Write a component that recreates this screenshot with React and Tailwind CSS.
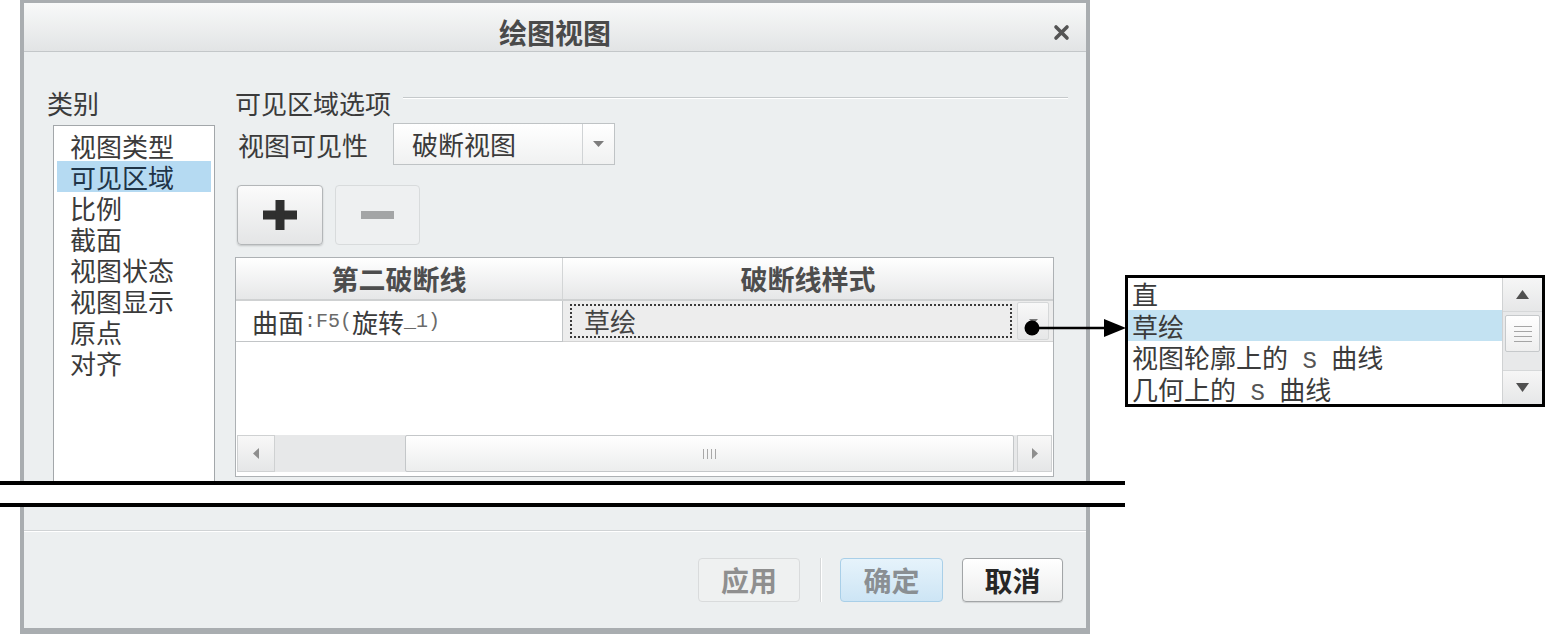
import React from 'react';

const categories = ['视图类型', '可见区域', '比例', '截面', '视图状态', '视图显示', '原点', '对齐'];

const Tri = ({ dir = 'down', w = 10, h = 6, className = '' }) => {
  const pts = {
    down: '0,0 10,0 5,10',
    up: '0,10 10,10 5,0',
    left: '10,0 10,10 0,5',
    right: '0,0 0,10 10,5',
  }[dir];
  return (
    <svg width={w} height={h} viewBox="0 0 10 10" preserveAspectRatio="none" className={className}>
      <polygon points={pts} fill="currentColor" />
    </svg>
  );
};

const CloseIcon = () => (
  <svg width="17" height="17" viewBox="0 0 17 17">
    <path d="M3 3 L14 14 M14 3 L3 14" stroke="#545454" strokeWidth="3.6" strokeLinecap="round" />
  </svg>
);

const PlusIcon = () => (
  <svg width="34" height="30" viewBox="0 0 34 30">
    <rect x="0" y="10.5" width="34" height="9" fill="#2f2f2f" />
    <rect x="12.5" y="0" width="9" height="30" fill="#2f2f2f" />
  </svg>
);

const MinusIcon = () => (
  <svg width="33" height="8" viewBox="0 0 33 8">
    <rect x="0" y="0" width="33" height="8" fill="#a3a5a6" />
  </svg>
);

const TopPart = () => (
  <div className="ml-[20px] w-[1070px] h-[481px] shrink-0 flex flex-col border-x-4 border-t-[3px] border-[#a9adb0] bg-[#eceff0]">
    {/* title bar */}
    <div className="h-[49px] shrink-0 grid grid-cols-[1fr_auto_1fr] items-center pt-[10px] bg-linear-to-b from-[#f8f9f9] to-[#e2e4e5] border-b border-[#c3c7c9]">
      <div />
      <div className="text-[28px] font-bold leading-none text-[#4a4a4a]">绘图视图</div>
      <div className="flex justify-end pr-[16px]">
        <CloseIcon />
      </div>
    </div>

    <div className="flex-1 min-h-0 flex pl-[23px] pt-[35px] gap-[20px]">
      {/* category list */}
      <div className="w-[168px] flex flex-col">
        <div className="h-[31px] text-[26px] leading-[31px]">类别</div>
        <div className="mt-[7px] ml-[6px] flex-1 bg-white border border-b-0 border-[#a3a7aa] pt-[4px]">
          {categories.map((c) => (
            <div
              key={c}
              className={
                c === '可见区域'
                  ? 'mx-[3px] h-[31px] pl-[13px] text-[26px] leading-[31px] bg-[#b5daf2] text-[#1f3447]'
                  : 'mx-[3px] h-[31px] pl-[13px] text-[26px] leading-[31px]'
              }
            >
              {c}
            </div>
          ))}
        </div>
      </div>

      {/* options */}
      <div className="w-[819px] flex flex-col">
        <div className="h-[31px] flex">
          <span className="text-[26px] leading-[31px]">可见区域选项</span>
          <div className="flex-1 mt-[10px] ml-[12px] -mr-[14px] h-[2px] border-t border-[#c5c9cb] border-b border-b-white" />
        </div>

        <div className="mt-[5px] h-[42px] flex items-center pl-[3px]">
          <span className="w-[155px] text-[26px] leading-[31px]">视图可见性</span>
          <div className="w-[222px] h-[42px] flex border border-[#bfc3c5] bg-linear-to-b from-white to-[#f0f1f1]">
            <div className="flex-1 pl-[18px] text-[26px] leading-[40px]">破断视图</div>
            <div className="w-[32px] border-l border-[#d0d3d5] flex items-center justify-center text-[#7d7d7d]">
              <Tri w={11} h={6} />
            </div>
          </div>
        </div>

        <div className="mt-[20px] h-[60px] flex gap-[12px] pl-[2px]">
          <button className="w-[86px] h-[60px] rounded-[4px] border border-[#b3b6b8] bg-linear-to-b from-[#fbfbfb] to-[#e4e5e6] shadow-[0_1px_2px_rgba(0,0,0,0.18)] flex items-center justify-center">
            <PlusIcon />
          </button>
          <button className="w-[85px] h-[60px] rounded-[4px] border border-[#d8dbdc] bg-[#eef0f1] flex items-center justify-center">
            <MinusIcon />
          </button>
        </div>

        {/* table */}
        <div className="mt-[12px] h-[220px] border border-[#adb1b4] bg-white flex flex-col">
          <div className="h-[43px] flex bg-linear-to-b from-white to-[#e6e7e8] border-b-2 border-[#cfd1d2] text-[27px] font-bold text-[#4d4d4d]">
            <div className="w-[327px] border-r border-[#d3d5d6] flex items-center justify-center leading-none">第二破断线</div>
            <div className="flex-1 flex items-center justify-center leading-none">破断线样式</div>
          </div>
          <div className="h-[41px] flex">
            <div className="w-[327px] border-r border-b border-[#c2c5c7] bg-white pl-[16px] flex items-center text-[26px] leading-[31px]">
              <span>曲面</span>
              <span className="font-['Liberation_Mono',monospace] text-[20px] text-[#6a6a6a]">:F5(</span>
              <span>旋转</span>
              <span className="font-['Liberation_Mono',monospace] text-[20px] text-[#6a6a6a]">_1)</span>
            </div>
            <div className="flex-1 bg-[#ededed] flex items-center pl-[7px] pr-[2px] border-b border-[#d3d3d3]">
              <div className="w-[442px] h-[34px] border-2 border-dotted border-[#3a3a3a] pl-[12px] text-[26px] leading-[29px] text-[#444]">草绘</div>
              <div className="ml-[5px] w-[32px] h-[38px] rounded-[2px] border border-[#d6d8d9] bg-linear-to-b from-[#f8f8f8] to-[#e6e7e8] flex items-center justify-center text-[#777]">
                <Tri w={9} h={5} />
              </div>
            </div>
          </div>
          <div className="flex-1" />
          <div className="h-[37px] mx-[1px] flex bg-[#e7e8e9]">
            <div className="w-[38px] border border-[#cfd1d2] bg-linear-to-b from-[#f8f8f8] to-[#e5e6e7] flex items-center justify-center text-[#8e8e8e]">
              <Tri dir="left" w={6} h={11} />
            </div>
            <div className="w-[130px]" />
            <div className="flex-1 border border-[#c4c7c9] rounded-[2px] bg-linear-to-b from-white to-[#eceded] flex items-center justify-center gap-[3px]">
              <div className="w-px h-[10px] bg-[#a8a8a8]" />
              <div className="w-px h-[10px] bg-[#a8a8a8]" />
              <div className="w-px h-[10px] bg-[#a8a8a8]" />
              <div className="w-px h-[10px] bg-[#a8a8a8]" />
            </div>
            <div className="w-[3px]" />
            <div className="w-[35px] border border-[#cfd1d2] bg-linear-to-b from-[#f8f8f8] to-[#e5e6e7] flex items-center justify-center text-[#8e8e8e]">
              <Tri dir="right" w={6} h={11} />
            </div>
          </div>
          <div className="h-[4px]" />
        </div>
      </div>
    </div>
  </div>
);

const BottomPart = () => (
  <div className="ml-[20px] w-[1070px] flex-1 border-x-4 border-b-[6px] border-[#a9adb0] bg-[#eceff0] flex flex-col">
    <div className="mt-[23px] h-[2px] border-t border-[#d0d3d5] border-b border-b-white" />
    <div className="mt-[26px] h-[44px] flex justify-end pr-[23px] text-[28px] font-bold">
      <button className="w-[102px] h-[44px] rounded-[4px] border border-[#d9dbdc] bg-[#eff1f1] text-[#8f8f8f] leading-none">应用</button>
      <div className="ml-[20px] w-[2px] h-[44px] border-l border-[#d6d8d9] border-r border-r-white" />
      <button className="ml-[18px] w-[103px] h-[44px] rounded-[4px] border border-[#a9cfe8] bg-linear-to-b from-[#e6f3fb] to-[#cde5f5] text-[#8a8f93] leading-none">确定</button>
      <button className="ml-[19px] w-[101px] h-[44px] rounded-[4px] border border-[#a2a5a7] bg-linear-to-b from-white to-[#eceded] shadow-[0_1px_1px_rgba(0,0,0,0.12)] text-[#262626] leading-none">取消</button>
    </div>
  </div>
);

const StylePopup = () => (
  <div className="w-[420px] h-[132px] border-[3px] border-black bg-white flex">
    <div className="flex-1 flex flex-col">
      <div className="h-[31.5px] pl-[4px] text-[26px] leading-[31.5px]">直</div>
      <div className="h-[31.5px] pl-[4px] text-[26px] leading-[31.5px] bg-[#c3e2f2]">草绘</div>
      <div className="h-[31.5px] pl-[4px] text-[26px] leading-[31.5px] whitespace-pre">
        视图轮廓上的<span className="font-['Liberation_Mono',monospace] text-[24px] text-[#555]"> S </span>曲线
      </div>
      <div className="h-[31.5px] pl-[4px] text-[26px] leading-[31.5px] whitespace-pre">
        几何上的<span className="font-['Liberation_Mono',monospace] text-[24px] text-[#555]"> S </span>曲线
      </div>
    </div>
    <div className="w-[40px] bg-[#e8e9ea] border-l border-[#d0d2d3] flex flex-col">
      <div className="h-[34px] border-b border-[#d6d8d9] bg-linear-to-b from-[#f6f6f6] to-[#e6e7e8] flex items-center justify-center text-[#505050]">
        <Tri dir="up" w={13} h={9} />
      </div>
      <div className="mt-[3px] h-[37px] mx-[2px] border border-[#c6c9cb] rounded-[2px] bg-linear-to-b from-white to-[#eeeeee] flex flex-col items-center justify-center gap-[4px]">
        <div className="w-[18px] h-px bg-[#a5a5a5]" />
        <div className="w-[18px] h-px bg-[#a5a5a5]" />
        <div className="w-[18px] h-px bg-[#a5a5a5]" />
        <div className="w-[18px] h-px bg-[#a5a5a5]" />
      </div>
      <div className="flex-1" />
      <div className="h-[34px] border-t border-[#d6d8d9] bg-linear-to-b from-[#f6f6f6] to-[#e6e7e8] flex items-center justify-center text-[#505050]">
        <Tri dir="down" w={13} h={9} />
      </div>
    </div>
  </div>
);

// callout: dot on the cell's dropdown, arrow into the option list
const Pointer = () => (
  <svg className="absolute left-[1020px] top-[316px]" width="108" height="24" viewBox="0 0 108 24">
    <circle cx="12" cy="12" r="7.5" fill="#000" />
    <line x1="12" y1="12" x2="86" y2="12" stroke="#000" strokeWidth="2.5" />
    <polygon points="84,3 106,12 84,21" fill="#000" />
  </svg>
);

export default function App() {
  return (
    <div className="relative w-[1546px] h-[634px] bg-white overflow-hidden flex font-['Noto_Sans_CJK_SC',sans-serif] text-[#3b3b3b]">
      <div className="w-[1125px] shrink-0 flex flex-col">
        <TopPart />
        <div className="h-[4px] shrink-0 bg-black" />
        <div className="h-[18px] shrink-0" />
        <div className="h-[4px] shrink-0 bg-black" />
        <BottomPart />
      </div>
      <div className="flex-1 pt-[275px]">
        <StylePopup />
      </div>
      <Pointer />
    </div>
  );
}
